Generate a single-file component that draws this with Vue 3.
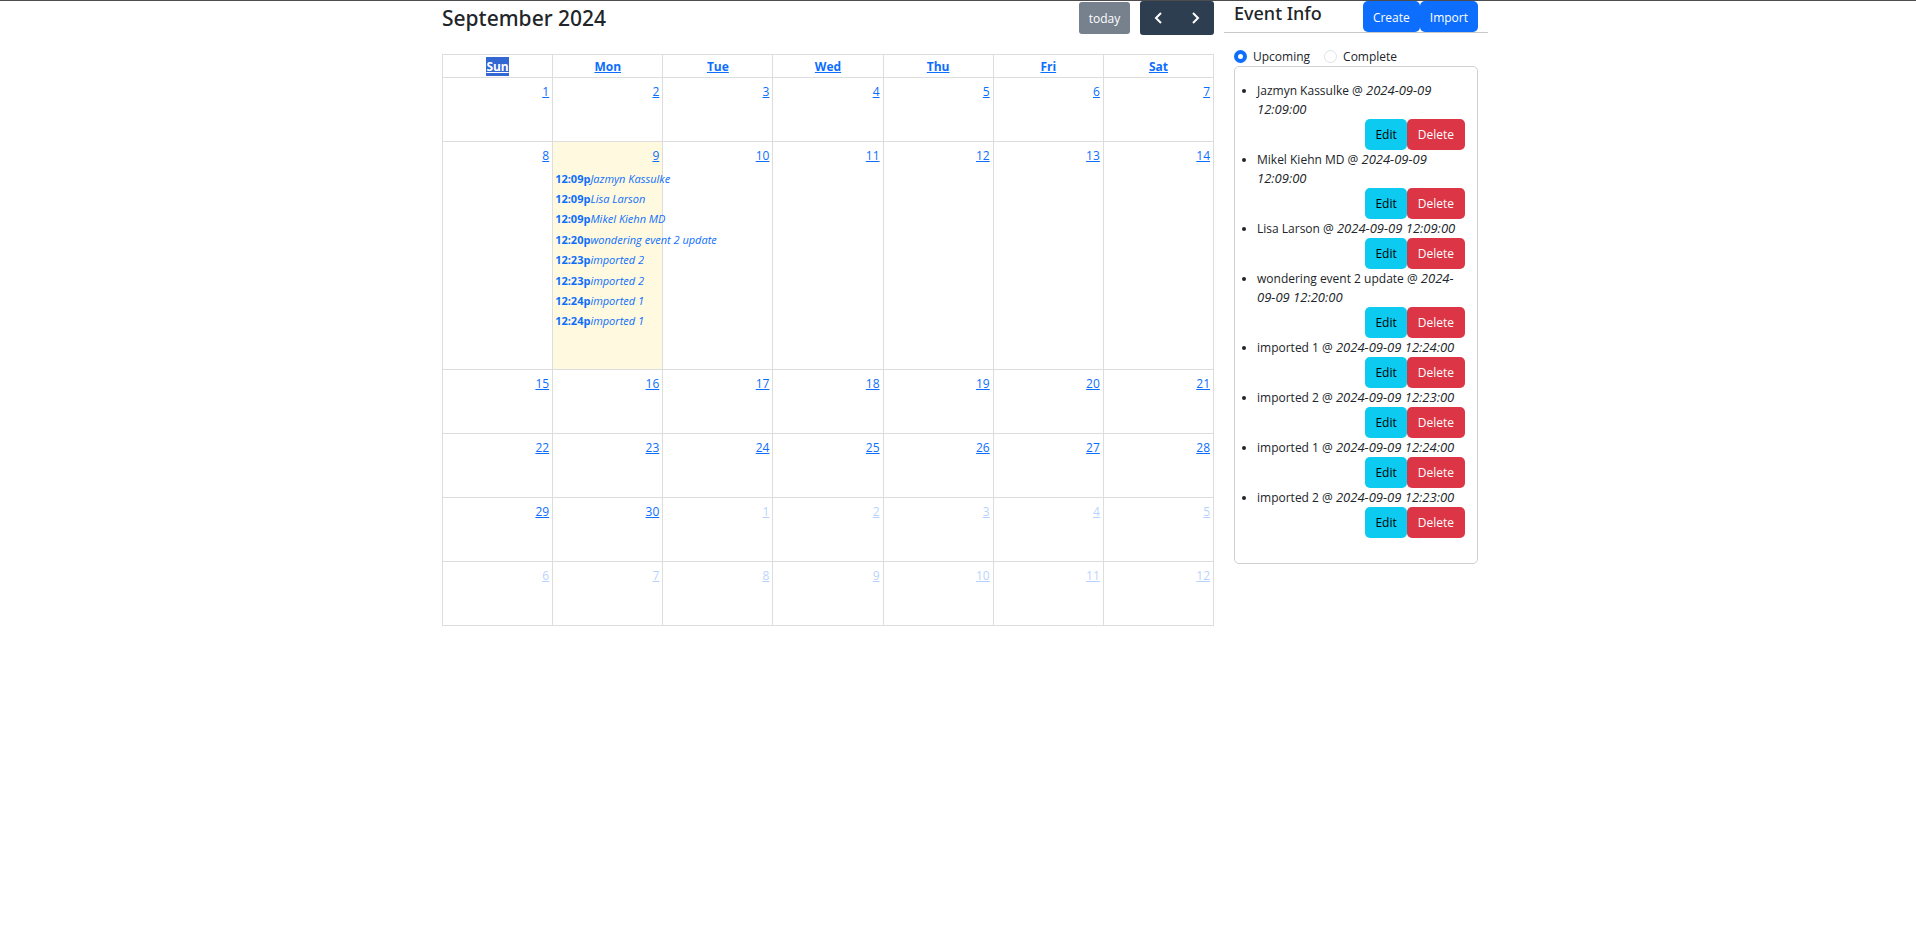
<script setup>
import { ref } from 'vue'

const dayNames = ['Sun', 'Mon', 'Tue', 'Wed', 'Thu', 'Fri', 'Sat']

const weeks = Array.from({ length: 6 }, (_, w) =>
  Array.from({ length: 7 }, (_, d) => {
    const n = w * 7 + d + 1
    return { key: n, label: n > 30 ? n - 30 : n, other: n > 30, today: n === 9 }
  })
)

const calendarEvents = [
  { time: '12:09p', title: 'Jazmyn Kassulke' },
  { time: '12:09p', title: 'Lisa Larson' },
  { time: '12:09p', title: 'Mikel Kiehn MD' },
  { time: '12:20p', title: 'wondering event 2 update' },
  { time: '12:23p', title: 'imported 2' },
  { time: '12:23p', title: 'imported 2' },
  { time: '12:24p', title: 'imported 1' },
  { time: '12:24p', title: 'imported 1' }
]

const events = [
  { name: 'Jazmyn Kassulke', date: '2024-09-09 12:09:00' },
  { name: 'Mikel Kiehn MD', date: '2024-09-09 12:09:00' },
  { name: 'Lisa Larson', date: '2024-09-09 12:09:00' },
  { name: 'wondering event 2 update', date: '2024-09-09 12:20:00' },
  { name: 'imported 1', date: '2024-09-09 12:24:00' },
  { name: 'imported 2', date: '2024-09-09 12:23:00' },
  { name: 'imported 1', date: '2024-09-09 12:24:00' },
  { name: 'imported 2', date: '2024-09-09 12:23:00' }
]

const filter = ref('upcoming')
</script>

<template>
  <div class="page">
    <main class="container">
      <section class="calendar">
        <div class="toolbar">
          <h2>September 2024</h2>
          <div class="toolbar-actions">
            <button type="button" class="today-btn" disabled>today</button>
            <div class="nav-group">
              <button type="button" aria-label="Previous month">
                <svg width="20" height="20" viewBox="0 0 20 20"><path d="M12 5 L7 10 L12 15" /></svg>
              </button>
              <button type="button" aria-label="Next month">
                <svg width="20" height="20" viewBox="0 0 20 20"><path d="M7 5 L12 10 L7 15" /></svg>
              </button>
            </div>
          </div>
        </div>

        <table>
          <thead>
            <tr>
              <th v-for="(name, i) in dayNames" :key="name" scope="col">
                <a href="#" :class="{ selected: i === 0 }">{{ name }}</a>
              </th>
            </tr>
          </thead>
          <tbody>
            <tr v-for="(week, w) in weeks" :key="w">
              <td v-for="day in week" :key="day.key" :class="{ today: day.today, other: day.other }">
                <div class="day-top"><a href="#">{{ day.label }}</a></div>
                <div v-if="day.today" class="day-events">
                  <a v-for="(e, i) in calendarEvents" :key="i" href="#"><b>{{ e.time }}</b><i>{{ e.title }}</i></a>
                </div>
              </td>
            </tr>
          </tbody>
        </table>
      </section>

      <aside class="side">
        <header class="side-header">
          <h4>Event Info</h4>
          <div class="buttons">
            <button type="button" class="btn primary">Create</button>
            <button type="button" class="btn primary">Import</button>
          </div>
        </header>

        <div class="filters">
          <label><input v-model="filter" type="radio" name="filter" value="upcoming" />Upcoming</label>
          <label><input v-model="filter" type="radio" name="filter" value="complete" />Complete</label>
        </div>

        <div class="card">
          <ul>
            <li v-for="(e, i) in events" :key="i">
              {{ e.name }} @ <i>{{ e.date }}</i>
              <div class="buttons end">
                <button type="button" class="btn info">Edit</button>
                <button type="button" class="btn danger">Delete</button>
              </div>
            </li>
          </ul>
        </div>
      </aside>
    </main>
  </div>
</template>

<style>
body {
  background: #fff;
}
</style>

<style scoped>
.page {
  border-top: 1px solid #4d4d4f;
  font-family: "Open Sans", "Noto Sans", sans-serif;
  font-size: 12px;
  line-height: 19px;
  color: #212529;
}
.page * {
  box-sizing: border-box;
}
button {
  font: inherit;
  border: 0;
  margin: 0;
  color: #fff;
}
a {
  color: #0d6efd;
}
.container {
  max-width: 1060px;
  margin: 0 auto;
  padding-left: 14px;
  display: grid;
  grid-template-columns: minmax(0, 1fr) 264px;
  gap: 10px;
  align-items: start;
}
.toolbar {
  display: flex;
  align-items: center;
  justify-content: space-between;
  margin-bottom: 19px;
}
h2,
h4 {
  margin: 0;
  font-family: "Noto Sans", "Open Sans", sans-serif;
  font-weight: 500;
}
h2 {
  font-size: 21px;
  line-height: 34px;
}
h4 {
  font-size: 18px;
  line-height: 25px;
}
.toolbar-actions {
  display: flex;
  align-items: center;
  gap: 10px;
}
.today-btn {
  width: 51px;
  height: 32px;
  padding: 0;
  border-radius: 3px;
  background: #76818d;
}
.nav-group {
  display: flex;
  border-radius: 3px;
  overflow: hidden;
}
.nav-group button {
  width: 37px;
  height: 34px;
  padding: 0;
  display: flex;
  align-items: center;
  justify-content: center;
  background: #2c3e50;
}
svg {
  fill: none;
  stroke: #fff;
  stroke-width: 2;
}
table {
  width: 100%;
  table-layout: fixed;
  border-collapse: collapse;
}
th,
td {
  border: 1px solid #ddd;
  padding: 0;
}
th {
  height: 23px;
  text-align: center;
}
th a {
  display: inline-block;
}
th a.selected {
  background: #3367d1;
  color: #fff;
}
td {
  height: 64px;
  vertical-align: top;
}
td.today {
  background: #fff9df;
}
.day-top {
  padding: 4px 3px 0;
  text-align: right;
}
.other .day-top {
  opacity: 0.3;
}
.day-events {
  display: grid;
  grid-auto-rows: 1fr;
  height: 163px;
  margin: 3px 0 38px;
  padding-left: 2px;
}
.day-events a {
  display: flex;
  align-items: center;
  font-size: 11px;
  text-decoration: none;
  white-space: nowrap;
}
.side-header {
  display: flex;
  justify-content: space-between;
  align-items: flex-start;
  padding: 0 10px;
  border-bottom: 1px solid #c8c8c8;
}
.buttons {
  display: flex;
}
.buttons.end {
  justify-content: flex-end;
}
.btn {
  height: 31px;
  padding: 0 11px;
  border-radius: 5px;
}
.primary {
  padding: 1px 10px 0;
  background: #0d6efd;
}
.info {
  padding: 0 10px;
  background: #0dcaf0;
  color: #000;
}
.danger {
  background: #dc3545;
}
.filters {
  display: flex;
  gap: 14px;
  padding: 14px 10px 0;
}
.filters label {
  display: flex;
  align-items: center;
}
.filters input {
  appearance: none;
  width: 13px;
  height: 13px;
  margin: 0 6px 0 0;
  border: 1px solid #dee2e6;
  border-radius: 50%;
  background: #fff;
}
.filters input:checked {
  border: 4px solid #0d6efd;
}
.card {
  margin: 0 10px;
  padding: 14px 12px 25px 22px;
  border: 1px solid #d0d1d2;
  border-radius: 5px;
}
ul {
  margin: 0;
  padding: 0;
}
li i {
  font-size: 13px;
  line-height: 1;
}
</style>
